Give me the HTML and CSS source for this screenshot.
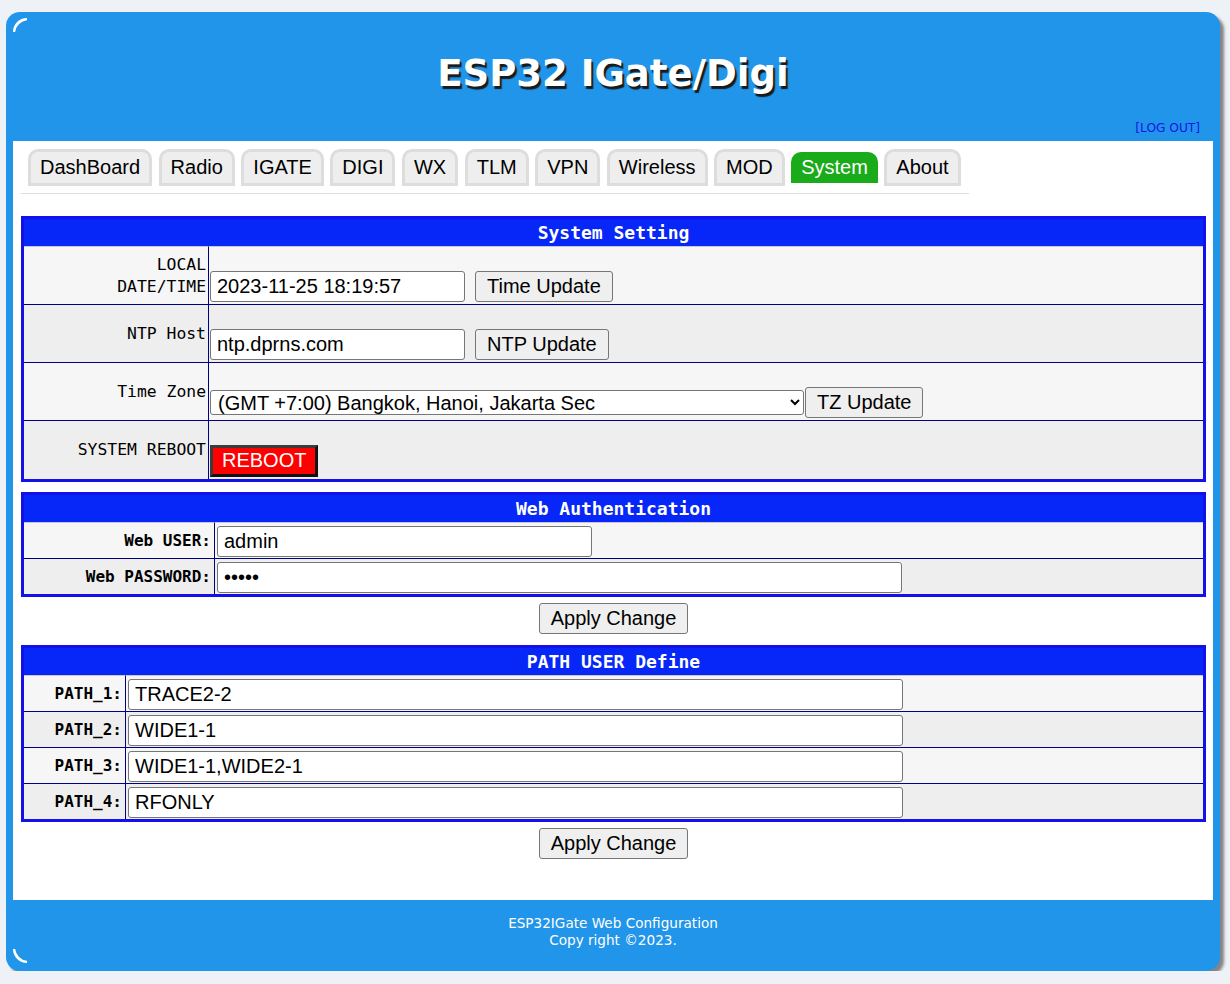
FILE: index.html
```html
<!DOCTYPE html>
<html lang="en">
<head>
<meta charset="utf-8">
<title>ESP32 IGate/Digi</title>
<link rel="stylesheet" href="styles.css">
</head>
<body>
<div class="frame">
  <header class="top">
    <h1 class="title">ESP32 IGate/Digi</h1>
    <div class="logout-row"><a class="logout" href="#">[LOG OUT]</a></div>
  </header>
  <main class="content">
    <nav class="tabs">
      <a class="tab" href="#">DashBoard</a>
      <a class="tab" href="#">Radio</a>
      <a class="tab" href="#">IGATE</a>
      <a class="tab" href="#">DIGI</a>
      <a class="tab" href="#">WX</a>
      <a class="tab" href="#">TLM</a>
      <a class="tab" href="#">VPN</a>
      <a class="tab" href="#">Wireless</a>
      <a class="tab" href="#">MOD</a>
      <a class="tab active" href="#">System</a>
      <a class="tab" href="#">About</a>
    </nav>

    <table class="panel panel-sys">
      <tr><th colspan="2">System Setting</th></tr>
      <tr>
        <td class="lbl">LOCAL<br>DATE/TIME</td>
        <td class="val"><div class="ctl gap10"><input class="txt w-date" type="text" value="2023-11-25 18:19:57"><button class="btn">Time Update</button></div></td>
      </tr>
      <tr>
        <td class="lbl">NTP Host</td>
        <td class="val"><div class="ctl gap10"><input class="txt w-date" type="text" value="ntp.dprns.com"><button class="btn">NTP Update</button></div></td>
      </tr>
      <tr>
        <td class="lbl">Time Zone</td>
        <td class="val"><div class="ctl gap1"><select class="sel"><option>(GMT +7:00) Bangkok, Hanoi, Jakarta Sec</option></select><button class="btn">TZ Update</button></div></td>
      </tr>
      <tr>
        <td class="lbl">SYSTEM REBOOT</td>
        <td class="val"><div class="ctl"><button class="reboot">REBOOT</button></div></td>
      </tr>
    </table>

    <table class="panel panel-auth">
      <tr><th colspan="2">Web Authentication</th></tr>
      <tr>
        <td class="lbl bold">Web USER:</td>
        <td class="val2"><input class="txt w-user" type="text" value="admin"></td>
      </tr>
      <tr>
        <td class="lbl bold">Web PASSWORD:</td>
        <td class="val2"><input class="txt w-pass" type="password" value="admin"></td>
      </tr>
    </table>
    <div class="btn-row"><button class="btn">Apply Change</button></div>

    <table class="panel panel-path">
      <tr><th colspan="2">PATH USER Define</th></tr>
      <tr>
        <td class="lbl bold">PATH_1:</td>
        <td class="val2"><input class="txt w-path" type="text" value="TRACE2-2"></td>
      </tr>
      <tr>
        <td class="lbl bold">PATH_2:</td>
        <td class="val2"><input class="txt w-path" type="text" value="WIDE1-1"></td>
      </tr>
      <tr>
        <td class="lbl bold">PATH_3:</td>
        <td class="val2"><input class="txt w-path" type="text" value="WIDE1-1,WIDE2-1"></td>
      </tr>
      <tr>
        <td class="lbl bold">PATH_4:</td>
        <td class="val2"><input class="txt w-path" type="text" value="RFONLY"></td>
      </tr>
    </table>
    <div class="btn-row"><button class="btn">Apply Change</button></div>
  </main>
  <footer class="foot">
    <div>ESP32IGate Web Configuration</div>
    <div>Copy right &copy;2023.</div>
  </footer>
</div>
</body>
</html>
```

FILE: styles.css
```css
html, body {
  margin: 0;
  padding: 0;
}
body {
  background: #eef1f5;
  font-family: "DejaVu Sans", Verdana, sans-serif;
}
.frame {
  position: relative;
  box-sizing: border-box;
  width: 1214px;
  margin: 12px 0 0 6px;
  padding: 0 7px;
  background: #2195ea;
  border-radius: 14px;
  box-shadow: 4px 4px 3px rgba(0, 0, 0, 0.45);
}
.frame::before,
.frame::after {
  content: "";
  position: absolute;
  left: 7px;
  width: 14px;
  height: 14px;
}
.frame::before {
  top: 6px;
  border-top-left-radius: 14px;
  box-shadow: inset 2px 2px 0 #fff;
}
.frame::after {
  bottom: 8px;
  border-bottom-left-radius: 14px;
  box-shadow: inset 2px -2px 0 #fff;
}
.top {
  box-sizing: border-box;
  height: 129px;
  padding-top: 41px;
}
.title {
  margin: 0;
  text-align: center;
  font-family: "DejaVu Sans", Verdana, sans-serif;
  font-weight: bold;
  font-size: 37px;
  line-height: 42px;
  color: #fff;
  text-shadow: 2px 3px 1px #1a1a1a;
}
.logout-row {
  margin-top: 25px;
  text-align: right;
  padding-right: 13px;
  line-height: 14px;
}
.logout {
  font-size: 12.2px;
  color: #1414e6;
  text-decoration: none;
}
.content {
  background: #fff;
  padding: 8px 7px 41px 8px;
}
.tabs {
  display: inline-flex;
  gap: 6.5px;
  padding: 0 8px 7px 7px;
  border-bottom: 1px solid #dddddd;
}
.tab {
  display: block;
  font-family: "Liberation Sans", Arial, sans-serif;
  font-size: 20px;
  line-height: 23px;
  padding: 4px 9px;
  color: #000;
  text-decoration: none;
  background: #eeeeee;
  border: 3px solid #dddddd;
  border-radius: 10px 10px 0 0;
}
.tab.active {
  background: #1aab1a;
  color: #fff;
  border: none;
  margin: 3px 0;
  padding: 4px 10px;
}
.panel {
  box-sizing: border-box;
  width: 100%;
  border: 3px solid #1410ea;
  border-spacing: 0;
  margin-top: 10px;
}
.panel-sys {
  margin-top: 22px;
}
.panel th {
  height: 27px;
  padding: 0;
  background: #0627f7;
  color: #fff;
  font-family: "DejaVu Sans Mono", monospace;
  font-weight: bold;
  font-size: 18px;
  text-align: center;
}
.panel td {
  box-sizing: border-box;
  border-top: 1px solid #000080;
}
.panel tr:nth-child(2) td {
  border-top-color: #c8c8d0;
}
.panel tr:nth-child(even) {
  background: #f6f6f6;
}
.panel tr:nth-child(odd) {
  background: #eeeeee;
}
.lbl {
  text-align: right;
  vertical-align: middle;
  padding: 0 2px 0 0;
  border-right: 1px solid #000080;
  font-family: "DejaVu Sans Mono", monospace;
  font-size: 16.4px;
  line-height: 22px;
  color: #000;
}
.lbl.bold {
  font-weight: bold;
  font-size: 16px;
  padding-right: 3px;
}
.panel-sys .lbl { width: 185px; }
.panel-auth .lbl { width: 191px; }
.panel-path .lbl { width: 102px; }
.val {
  padding: 24px 1px 2px 1px;
  vertical-align: bottom;
}
.val2 {
  padding: 3px 2px 1px 2px;
  vertical-align: middle;
}
.ctl {
  display: flex;
  align-items: center;
}
.gap10 { gap: 10px; }
.gap1 { gap: 1px; }
.txt {
  box-sizing: border-box;
  display: block;
  height: 31px;
  padding: 3px 6px;
  border: 1px solid #767676;
  border-radius: 3px;
  background: #fff;
  font-family: "Liberation Sans", Arial, sans-serif;
  font-size: 20px;
  color: #000;
}
.w-date { width: 255px; }
.w-user { width: 375px; }
.w-pass { width: 685px; }
.w-path { width: 775px; }
.sel {
  box-sizing: border-box;
  width: 594px;
  height: 25px;
  padding: 0 0 0 3px;
  border: 1px solid #767676;
  border-radius: 3px;
  background: #fff;
  font-family: "Liberation Sans", Arial, sans-serif;
  font-size: 20px;
  color: #000;
}
.btn {
  box-sizing: border-box;
  height: 31px;
  padding: 3px 11px;
  border: 1px solid #767676;
  border-radius: 3px;
  background: #efefef;
  font-family: "Liberation Sans", Arial, sans-serif;
  font-size: 20px;
  line-height: 23px;
  color: #000;
}
.reboot {
  box-sizing: border-box;
  height: 32px;
  padding: 1px 9px 2px;
  border: 3px solid;
  border-color: #3c3c3c #111 #111 #3c3c3c;
  background: #ff0000;
  color: #fff;
  font-family: "Liberation Sans", Arial, sans-serif;
  font-size: 20px;
  line-height: 23px;
}
.btn-row {
  text-align: center;
  padding: 6px 0 0;
  line-height: 0;
}
.btn-row + .panel {
  margin-top: 11px;
}
.foot {
  box-sizing: border-box;
  height: 71px;
  padding-top: 15px;
  text-align: center;
  color: #fff;
  font-size: 13.6px;
  line-height: 17px;
  border-radius: 0 0 14px 14px;
}
```
